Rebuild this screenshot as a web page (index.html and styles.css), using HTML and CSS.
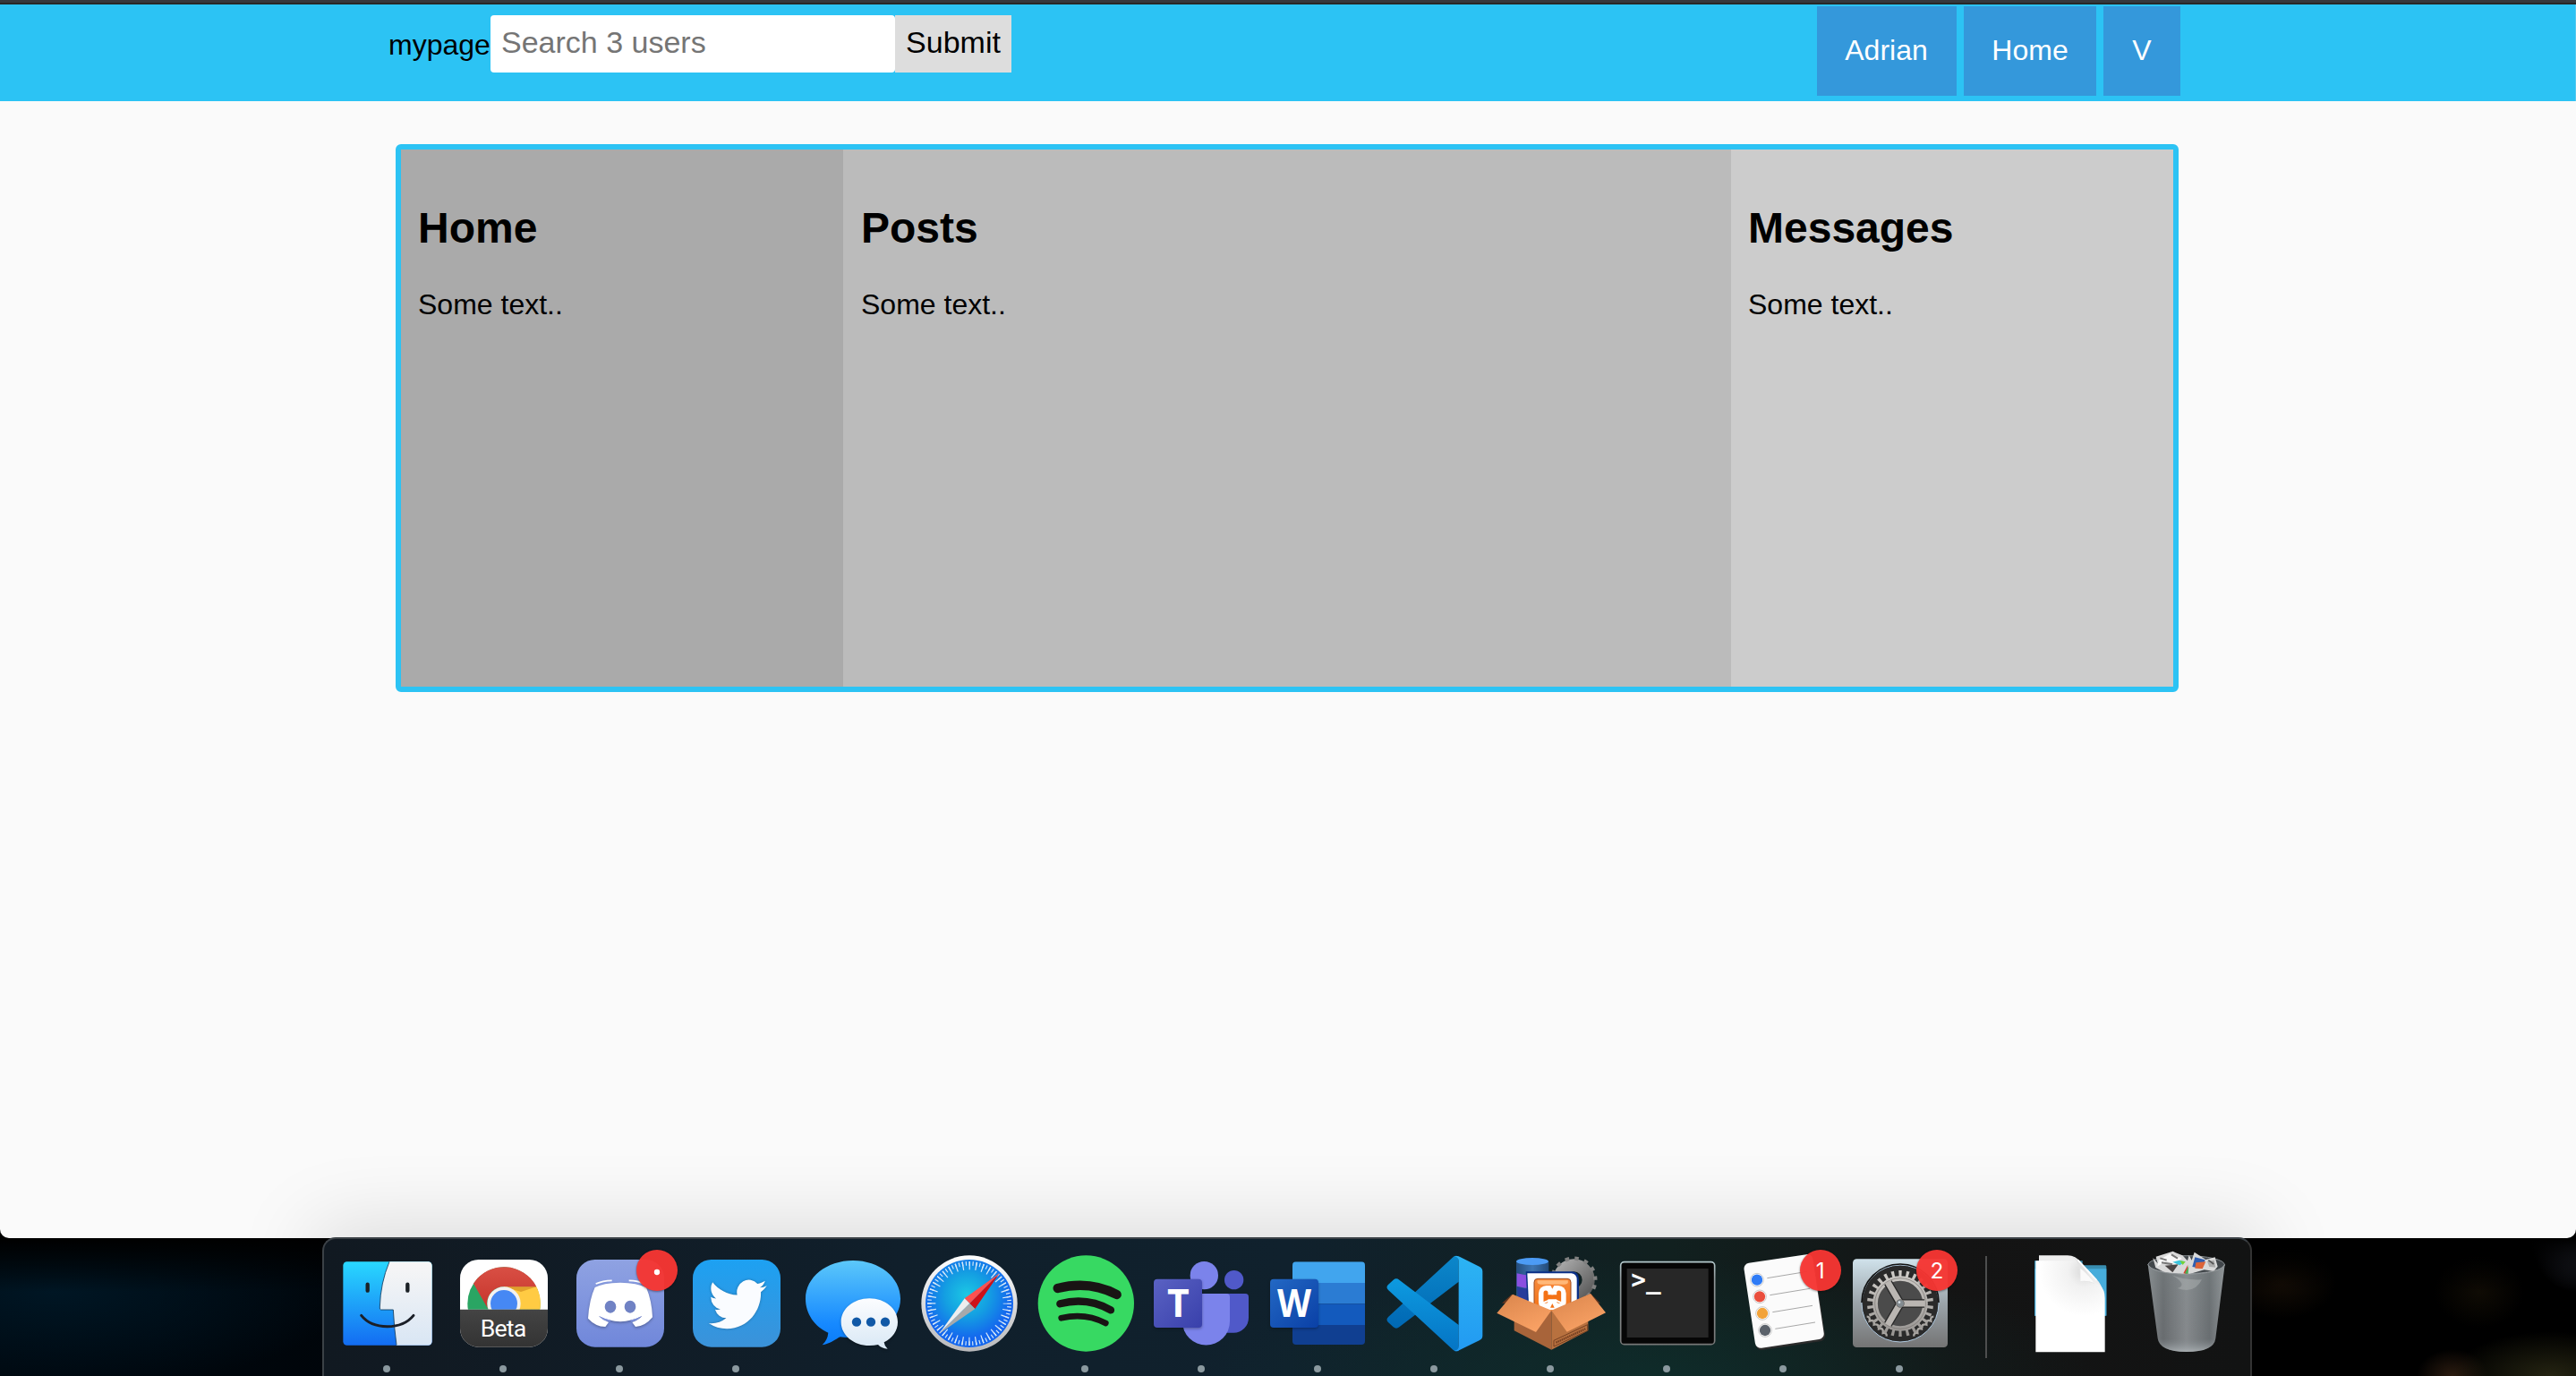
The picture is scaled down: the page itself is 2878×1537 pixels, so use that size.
FILE: index.html
```html
<!DOCTYPE html>
<html lang="en">
<head>
<meta charset="utf-8">
<title>mypage</title>
<link rel="stylesheet" href="styles.css">
</head>
<body>
<main class="window">
  <header class="topbar">
    <form class="search">
      <span class="brand">mypage</span>
      <input class="search-input" type="text" placeholder="Search 3 users">
      <button class="search-submit" type="button">Submit</button>
    </form>
    <nav class="nav">
      <a class="nav-link nav-user">Adrian</a>
      <a class="nav-link nav-home">Home</a>
      <a class="nav-link nav-more">V</a>
    </nav>
  </header>
  <section class="columns">
    <article class="column column-home"><h2>Home</h2><p>Some text..</p></article>
    <article class="column column-posts"><h2>Posts</h2><p>Some text..</p></article>
    <article class="column column-messages"><h2>Messages</h2><p>Some text..</p></article>
  </section>
  <div class="dock-shade"></div>
</main>
<footer class="desktop">
  <div class="dock">
    <!-- Finder -->
    <svg class="app" viewBox="81 132 390 459">
      <defs>
        <linearGradient id="fb" x2="0" y2="1"><stop stop-color="#29d8ff"/><stop offset="1" stop-color="#136cf2"/></linearGradient>
        <linearGradient id="fw" x2="0" y2="1"><stop stop-color="#f7f6f6"/><stop offset="1" stop-color="#d9e6f4"/></linearGradient>
      </defs>
      <rect x="130" y="208" width="298" height="280" rx="13" fill="url(#fb)"/>
      <path d="M285 208H415a13 13 0 0 1 13 13V475a13 13 0 0 1-13 13H309Q301 430 298 369H257Q252 369 253 360Q255 280 285 208Z" fill="url(#fw)"/>
      <path d="M285 208Q255 280 253 360Q252 369 257 369H298Q301 430 309 487" fill="none" stroke="#123a5c" stroke-width="2.5"/>
      <path d="M212 284v21M346 284v21" stroke="#1b2126" stroke-width="13" stroke-linecap="round"/>
      <path d="M191 388C230 437 325 438 366 388" fill="none" stroke="#1b1f27" stroke-width="9" stroke-linecap="round"/>
      <circle cx="276" cy="567" r="12" class="dot"/>
    </svg>
    <!-- Chrome Beta -->
    <svg class="app" viewBox="471 132 390 459">
      <defs>
        <clipPath id="ct"><rect x="522" y="200" width="294" height="168"/></clipPath>
        <linearGradient id="cr" x2="0" y2="1"><stop stop-color="#d94f44"/><stop offset="1" stop-color="#c5352c"/></linearGradient>
        <linearGradient id="cb" x2="0" y2="1"><stop stop-color="#444"/><stop offset="1" stop-color="#333"/></linearGradient>
      </defs>
      <rect x="522" y="201" width="294" height="293" rx="62" fill="#fff"/>
      <g clip-path="url(#ct)">
        <circle cx="669" cy="348" r="122" fill="#2aa563"/>
        <path d="M669 292H778A122 122 0 0 1 669 470Z" fill="#ffcb43"/>
        <path d="M669 292H778L726 309Z" fill="#e0a02b"/>
        <path d="M567 281A122 122 0 0 1 778 292H669A56 56 0 0 0 615 365Z" fill="url(#cr)"/>
        <circle cx="669" cy="348" r="56" fill="#f3f2f0"/>
        <circle cx="669" cy="348" r="45" fill="#4688f4"/>
      </g>
      <path d="M522 368H816V432a62 62 0 0 1-62 62H584a62 62 0 0 1-62-62Z" fill="url(#cb)"/>
      <text x="590" y="458" class="beta" textLength="155">Beta</text>
      <circle cx="666" cy="567" r="12" class="dot"/>
    </svg>
    <!-- Discord -->
    <svg class="app" viewBox="861 132 390 459">
      <defs><linearGradient id="dg" x2="0" y2="1"><stop stop-color="#8fa2e2"/><stop offset="1" stop-color="#7087da"/></linearGradient></defs>
      <rect x="912" y="201" width="294" height="293" rx="62" fill="url(#dg)"/>
      <path d="M977 282Q1000 272 1031 271M1088 271Q1119 272 1140 282" fill="none" stroke="#fff" stroke-width="5"/>
      <path class="soft" d="M974 294Q1000 279 1059 278Q1115 279 1146 294Q1165 340 1167 394Q1142 425 1110 426L1099 411Q1120 404 1132 390Q1095 408 1059 409Q1022 408 987 390Q1000 404 1020 411L1009 426Q975 425 951 398Q955 335 974 294Z" fill="#fff"/>
      <path d="M987 390Q1000 404 1024 409L1028 404Q1005 399 987 390M1132 390Q1120 404 1096 409L1092 404Q1115 399 1132 390" fill="#8193dc"/>
      <ellipse cx="1026" cy="359" rx="19" ry="21" fill="#7082c4"/><ellipse cx="1092" cy="359" rx="19" ry="21" fill="#7082c4"/>
      <circle class="badge" cx="1182" cy="237" r="69"/><circle cx="1182" cy="243" r="9.500" fill="#fff"/>
      <circle cx="1056" cy="567" r="12" class="dot"/>
    </svg>
    <!-- Twitter -->
    <svg class="app" viewBox="21 132 390 459">
      <defs><linearGradient id="tg" x2="0" y2="1"><stop stop-color="#1da1f2"/><stop offset="1" stop-color="#3b92d9"/></linearGradient></defs>
      <rect x="72" y="201" width="294" height="293" rx="62" fill="url(#tg)"/>
      <path class="soft-small" transform="translate(125 250) scale(8.13 8.4)" fill="#fafcff" d="M23.953 4.57a10 10 0 01-2.825.775 4.958 4.958 0 002.163-2.723c-.951.555-2.005.959-3.127 1.184a4.92 4.92 0 00-8.384 4.482C7.69 8.095 4.067 6.13 1.64 3.162a4.822 4.822 0 00-.666 2.475c0 1.71.87 3.213 2.188 4.096a4.904 4.904 0 01-2.228-.616v.06a4.923 4.923 0 003.946 4.827 4.996 4.996 0 01-2.212.085 4.936 4.936 0 004.604 3.417 9.867 9.867 0 01-6.102 2.105c-.39 0-.779-.023-1.17-.067a13.995 13.995 0 007.557 2.209c9.053 0 13.998-7.496 13.998-13.985 0-.21 0-.42-.015-.63A9.935 9.935 0 0024 4.59z"/>
      <circle cx="216" cy="567" r="12" class="dot"/>
    </svg>
    <!-- Messages -->
    <svg class="app" viewBox="411 132 390 459">
      <defs>
        <linearGradient id="mb" x2="0" y2="1"><stop stop-color="#5cc8fa"/><stop offset=".75" stop-color="#1689ff"/><stop offset="1" stop-color="#0b7cf8"/></linearGradient>
        <linearGradient id="mw" x2="0" y2="1"><stop stop-color="#fcfdff"/><stop offset="1" stop-color="#d9e8f5"/></linearGradient>
      </defs>
      <path d="M609 204C697 204 768 260 768 332S697 460 609 463Q585 463 566 460C550 468 530 484 506 487Q524 470 526 446C480 425 450 382 450 332C450 260 521 204 609 204Z" fill="url(#mb)"/>
      <path class="soft" d="M664 331C717 331 759 366 759 410C759 440 741 464 713 478Q714 490 725 500Q705 499 693 486Q680 489 664 489C611 489 569 454 569 410S611 331 664 331Z" fill="url(#mw)"/>
      <g fill="#1058a6"><circle cx="621" cy="410" r="15.500"/><circle cx="669" cy="410" r="15.500"/><circle cx="717" cy="410" r="15.500"/></g>
    </svg>
    <!-- Safari -->
    <svg class="app" viewBox="801 132 390 459">
      <defs>
        <radialGradient id="sg" cx=".47" cy=".4"><stop stop-color="#1cc8e4"/><stop offset=".5" stop-color="#149fe2"/><stop offset="1" stop-color="#1467ee"/></radialGradient>
        <linearGradient id="sr" x2="0" y2="1"><stop stop-color="#fff"/><stop offset="1" stop-color="#b9b9bb"/></linearGradient>
      </defs>
      <circle cx="999" cy="348" r="161" fill="url(#sr)"/>
      <circle cx="999" cy="348" r="147" fill="url(#sg)"/>
      <circle cx="999" cy="348" r="134" fill="none" stroke="#d7e9f8" stroke-width="14" pathLength="72" stroke-dasharray=".3 .7" stroke-dashoffset=".15"/>
      <circle cx="999" cy="348" r="127" fill="none" stroke="#d7e9f8" stroke-width="28" pathLength="36" stroke-dasharray=".17 .83" stroke-dashoffset=".085"/>
      <path d="M1100 247L983 331L1000 348Z" fill="#ff5150"/><path d="M1100 247L1018 366L1000 348Z" fill="#cf1018"/>
      <path d="M898 449L983 331L1000 348Z" fill="#ededee"/><path d="M898 449L1018 366L1000 348Z" fill="#a7a9ab"/>
    </svg>
    <!-- Spotify -->
    <svg class="app" viewBox="21 132 390 459">
      <circle cx="220" cy="348" r="161" fill="#37d962"/>
      <g fill="none" stroke="#191414" stroke-linecap="round">
        <path d="M125 297Q232 270 323 318" stroke-width="31"/>
        <path d="M133 349Q223 325 303 370" stroke-width="25"/>
        <path d="M137 397Q217 378 286 414" stroke-width="20"/>
      </g>
      <circle cx="216" cy="567" r="12" class="dot"/>
    </svg>
    <!-- Teams -->
    <svg class="app" viewBox="411 132 390 459">
      <defs><linearGradient id="tt" x2="1" y2="1"><stop stop-color="#5a62c3"/><stop offset="1" stop-color="#3940ab"/></linearGradient></defs>
      <circle cx="716" cy="269" r="32" fill="#5059c9"/>
      <path d="M660 315H754a11 11 0 0 1 11 11V396a50 50 0 0 1-50 50H670Z" fill="#5059c9"/>
      <circle cx="616" cy="254" r="47" fill="#7b83eb"/>
      <path d="M543 315H691a11 11 0 0 1 11 11V408a79.500 79.500 0 0 1-159 0Z" fill="#7b83eb"/>
      <rect class="soft" x="447" y="266" width="162" height="163" rx="12" fill="url(#tt)"/>
      <text x="529" y="392" class="letter">T</text>
      <circle cx="606" cy="567" r="12" class="dot"/>
    </svg>
    <!-- Word -->
    <svg class="app" viewBox="801 132 390 459">
      <defs>
        <clipPath id="wc"><rect x="912" y="208" width="243" height="278" rx="12"/></clipPath>
        <linearGradient id="wt" x2="1" y2="1"><stop stop-color="#2368c4"/><stop offset="1" stop-color="#0a40a6"/></linearGradient>
      </defs>
      <g clip-path="url(#wc)"><path d="M912 208h243v71H912z" fill="#41a5ee"/><path d="M912 279h243v70H912z" fill="#2b7cd3"/><path d="M912 349h243v71H912z" fill="#135abd"/><path d="M912 420h243v70H912z" fill="#103f91"/></g>
      <rect class="soft" x="837" y="266" width="162" height="163" rx="12" fill="url(#wt)"/>
      <text x="918" y="392" class="letter" textLength="114" lengthAdjust="spacingAndGlyphs">W</text>
      <circle cx="996" cy="567" r="12" class="dot"/>
    </svg>
    <!-- Visual Studio Code -->
    <svg class="app" viewBox="21 132 390 459">
      <defs>
        <linearGradient id="v1" x2="0" y2="1"><stop stop-color="#0c87ca"/><stop offset="1" stop-color="#0068b4"/></linearGradient>
        <linearGradient id="v2" x2="0" y2="1"><stop stop-color="#0d9ae0"/><stop offset="1" stop-color="#0574c4"/></linearGradient>
        <linearGradient id="v3" x2="0" y2="1"><stop stop-color="#2cb4f3"/><stop offset="1" stop-color="#229af2"/></linearGradient>
      </defs>
      <path d="M280 193Q287 186 299 190V275L100 427Q90 435 80 427L62 410Q54 401 64 392Z" fill="url(#v1)"/>
      <path d="M280 503Q287 510 299 507V420L100 269Q90 261 80 269L62 286Q54 295 64 304Z" fill="url(#v2)"/>
      <path d="M285 190Q292 187 302 191L368 224Q379 229 379 241V456Q379 467 368 472L302 504Q292 510 284 506Q299 506 299 490V205Q299 193 285 190Z" fill="url(#v3)"/>
      <circle cx="216" cy="567" r="12" class="dot"/>
    </svg>
    <!-- XAMPP -->
    <svg class="app" viewBox="411 132 390 459">
      <defs>
        <linearGradient id="xg" x2="1" y2="1"><stop stop-color="#a8a8a8"/><stop offset="1" stop-color="#5c5c5c"/></linearGradient>
        <linearGradient id="xc" x2="1"><stop stop-color="#244c7c"/><stop offset=".5" stop-color="#3e75b2"/><stop offset="1" stop-color="#234a78"/></linearGradient>
        <linearGradient id="xf" x2=".6" y2="1"><stop stop-color="#d9854c"/><stop offset="1" stop-color="#f9a164"/></linearGradient>
        <linearGradient id="xo" x2="0" y2="1"><stop stop-color="#f58a3b"/><stop offset="1" stop-color="#f47216"/></linearGradient>
      </defs>
      <circle cx="685" cy="269" r="49" fill="none" stroke="url(#xg)" stroke-width="42"/>
      <circle cx="685" cy="269" r="72" fill="none" stroke="#808080" stroke-width="13" pathLength="14" stroke-dasharray=".42 .58" stroke-dashoffset=".46"/>
      <path d="M492 208V335H601V208Z" fill="url(#xc)"/><path d="M494 247Q545 260 601 247V290Q545 303 494 290Z" fill="#8b4fe0"/><path d="M495 293Q545 304 601 293V345H500Z" fill="#273c9b"/>
      <ellipse cx="546" cy="207" rx="54" ry="12" fill="#4c9bf5"/>
      <path d="M444 347L476 318L610 371L742 315L774 347Z" fill="#65361f"/>
      <path d="M524 241H680Q702 243 702 267V370H531Z" fill="#092f87"/>
      <path d="M529 247H677Q695 249 695 269V370H535Z" fill="#fff"/>
      <rect x="552" y="265" width="123" height="110" rx="12" fill="url(#xo)" stroke="#9b4b1f" stroke-width="3"/>
      <path d="M563 271H665Q669 284 654 284H574Q560 284 563 271Z" fill="#ffb878"/>
      <rect x="567" y="288" width="92" height="82" rx="26" fill="#fff"/>
      <path d="M606 286L613 299L620 286Z" fill="#f68031"/>
      <path d="M591 312V340M635 312V340M591 326H635" stroke="#f47216" stroke-width="15" stroke-linecap="round"/>
      <path d="M613 307V319M581 346L601 338M645 346L625 338" stroke="#fff" stroke-width="6"/>
      <path d="M606 362L613 348L620 362Z" fill="#f47216"/>
      <path d="M485 370L610 371V503L485 439Z" fill="#a8643a"/><path d="M733 370L610 371V503L733 439Z" fill="#b8713f"/>
      <path d="M618 472L731 419V439L618 492Z" fill="none" stroke="#764022" stroke-width="3"/>
      <path d="M625 479L724 433" stroke="#764022" stroke-width="7" stroke-dasharray="5 2"/>
      <path d="M480 317L610 371L558 444L427 380Z" fill="url(#xf)"/><path d="M741 315L610 371L662 443L792 379Z" fill="url(#xf)"/>
      <circle cx="606" cy="567" r="12" class="dot"/>
    </svg>
    <!-- Terminal -->
    <svg class="app" viewBox="801 132 390 459">
      <defs><linearGradient id="te" x2="0" y2="1"><stop stop-color="#b3c8cb"/><stop offset=".2" stop-color="#929a9c"/><stop offset="1" stop-color="#777"/></linearGradient></defs>
      <rect x="842" y="209" width="315" height="276" rx="12" fill="#060606" stroke="url(#te)" stroke-width="5"/>
      <rect x="863" y="231" width="273" height="231" fill="#272727"/>
      <text x="877" y="298" class="prompt">&gt;_</text>
      <circle cx="996" cy="567" r="12" class="dot"/>
    </svg>
    <!-- Reminders -->
    <svg class="app" viewBox="21 132 390 459">
      <g transform="rotate(-8.500 221 341)">
        <rect x="105" y="201" width="234" height="290" rx="19" fill="#2b2b2b"/>
        <rect x="103" y="196" width="233" height="288" rx="19" fill="#fbfbfb"/>
      </g>
      <g stroke="#c9c9c9" stroke-width="3">
        <circle cx="129" cy="269" r="22" fill="#fff"/><circle cx="138" cy="325" r="22" fill="#fff"/><circle cx="147" cy="381" r="22" fill="#fff"/><circle cx="156" cy="438" r="22" fill="#fff"/>
        <path d="M163 263L297 241M172 320L306 298M181 377L315 355M190 433L324 411" stroke="#a8a8a8"/>
      </g>
      <circle cx="129" cy="269" r="18.500" fill="#2f7cf6"/><circle cx="138" cy="325" r="18.500" fill="#ea4e3d"/><circle cx="147" cy="381" r="18.500" fill="#f2a33a"/><circle cx="156" cy="438" r="18.500" fill="#5b626b"/>
      <circle class="badge" cx="342" cy="237" r="69"/><text x="341" y="264" class="count">1</text>
      <circle cx="216" cy="567" r="12" class="dot"/>
    </svg>
    <!-- System Preferences -->
    <svg class="app" viewBox="411 132 390 459">
      <defs>
        <linearGradient id="pg" x2="0" y2="1"><stop stop-color="#d0e2eb"/><stop offset=".5" stop-color="#9ba4aa"/><stop offset="1" stop-color="#747474"/></linearGradient>
        <linearGradient id="pm" gradientUnits="userSpaceOnUse" x1="500" y1="237" x2="500" y2="460"><stop stop-color="#d0cdc9"/><stop offset="1" stop-color="#969390"/></linearGradient>
      </defs>
      <rect x="450" y="199" width="318" height="296" rx="13" fill="url(#pg)"/>
      <circle cx="609" cy="348" r="129" fill="#2a2a2a" stroke="#afc8de" stroke-width="3"/>
      <path d="M480 345A129 129 0 0 1 738 345" fill="none" stroke="#111" stroke-width="5"/>
      <path d="M497 392Q509 392 506 407Q523 400 521 419Q538 414 537 433Q554 428 551 447Q565 445 563 458M721 392Q709 392 712 407Q695 400 697 419Q680 414 681 433Q664 428 667 447Q653 445 655 458" fill="none" stroke="#aaa7a3" stroke-width="7"/>
      <circle cx="609" cy="348" r="100" fill="none" stroke="url(#pm)" stroke-width="22" pathLength="26" stroke-dasharray=".4 .6" stroke-dashoffset=".7"/>
      <circle cx="609" cy="348" r="84" fill="#4b4b4b" stroke="url(#pm)" stroke-width="17"/>
      <circle cx="609" cy="348" r="85" fill="none" stroke="#77736f" stroke-width="2"/>
      <path d="M609 348H690M609 348L568 278M609 348L568 418" stroke="#292929" stroke-width="29"/>
      <path d="M609 348H692M609 348L567 276M609 348L567 420" stroke="#bab6b2" stroke-width="21"/>
      <circle cx="609" cy="348" r="13" fill="#838b90" stroke="#73716e" stroke-width="3"/><circle cx="606" cy="344" r="4" fill="#d8e1e6"/>
      <circle class="badge" cx="732" cy="237" r="69"/><text x="732" y="264" class="count">2</text>
      <circle cx="606" cy="567" r="12" class="dot"/>
    </svg>
    <div class="divider"></div>
    <!-- Documents stack -->
    <svg class="app" viewBox="-36 132 390 459">
      <defs>
        <radialGradient id="pp" gradientUnits="userSpaceOnUse" cx="205" cy="240" r="150"><stop stop-color="#d9d9d9"/><stop offset=".35" stop-color="#f1f1f1"/><stop offset="1" stop-color="#fff"/></radialGradient>
      </defs>
      <path d="M39 205H200V220H277Q280 220 280 225V390H39Z" fill="#398eb2"/><path d="M40 232H280V388H40Z" fill="#47addb"/>
      <path d="M54 187H150Q177 187 195 211L246 265Q264 285 270 310V505H54Z" fill="#eee"/>
      <path d="M43 205H158Q187 204 191 232L193 273Q275 267 275 330V511H43Z" fill="url(#pp)"/>
      <path d="M160 190Q194 204 192 273Q217 272 240 281Q226 255 196 218Q179 191 160 190Z" fill="#e4e4e4"/>
      <path d="M193 230V273Q218 270 239 279Q224 256 193 230Z" fill="#fafafa"/>
      <path d="M185 203L247 270" stroke="#fff" stroke-width="5"/>
    </svg>
    <!-- Trash -->
    <svg class="app" viewBox="354 132 390 459">
      <defs>
        <linearGradient id="rg" x2="1"><stop stop-color="#85898c"/><stop offset=".2" stop-color="#686c6f"/><stop offset=".5" stop-color="#85898c"/><stop offset=".8" stop-color="#696e71"/><stop offset="1" stop-color="#8f9396"/></linearGradient>
        <linearGradient id="rb" x2="0" y2="1"><stop stop-color="#9aa" stop-opacity=".15"/><stop offset=".85" stop-color="#889095" stop-opacity="0"/><stop offset="1" stop-color="#b1b7ba" stop-opacity=".8"/></linearGradient>
      </defs>
      <ellipse cx="548" cy="218" rx="128" ry="30" fill="#42474b" stroke="#8a9094" stroke-width="3"/>
      <path d="M436 195L452 214L446 191L503 173L512 178L535 187L552 205L557 186L566 203L575 176L613 201L644 193L653 224L640 240L608 235L552 251L481 247L445 228Z" fill="#d9d9d9"/>
      <path d="M456 202L492 182L533 196L510 217L480 206L450 224Z" fill="#f8f8f8"/><path d="M460 196L482 203M498 184L519 197M465 211L501 217" stroke="#777" stroke-width="6"/>
      <path d="M476 221L521 217L502 244Z" fill="#4a4545"/><path d="M502 209L524 203L545 208L526 220Z" fill="#3bc3dc"/><path d="M526 205L545 208L536 219Z" fill="#74d335"/>
      <path d="M577 193L611 202L600 231L568 225Z" fill="#315eb0"/><path d="M580 211L613 208L602 232L577 230Z" fill="#dc6439"/>
      <path d="M538 247L553 218L549 250" fill="#d83e2e"/><path d="M543 247L556 222L554 250" fill="#4aae56"/>
      <path d="M618 206L641 203L646 227L625 225Z" fill="#aaa"/><path d="M622 203L640 216" stroke="#555" stroke-width="5"/>
      <path d="M419 217Q433 247 548 250Q663 247 677 217L646 465Q640 510 548 510Q458 509 452 465Z" fill="url(#rg)"/>
      <path d="M419 217Q433 247 548 250Q663 247 677 217L646 465Q640 510 548 510Q458 509 452 465Z" fill="url(#rb)"/>
      <path d="M419 217Q433 247 548 250Q663 247 677 217" fill="none" stroke="#92979a" stroke-width="3"/>
      <path d="M500 253Q535 270 600 268Q575 318 518 297Q555 286 500 253Z" fill="#b2b5b6" opacity=".45"/>
    </svg>
  </div>
</footer>
</body>
</html>
```

FILE: styles.css
```css
* { box-sizing: border-box; }

body {
  margin: 0;
  width: 2878px;
  height: 1537px;
  overflow: hidden;
  display: flex;
  flex-direction: column;
  background: #000;
  color: #000;
  font: 32px/37px "Liberation Sans", Arial, sans-serif;
}

/* Browser window */
.window {
  position: relative;
  flex: none;
  height: 1383px;
  overflow: hidden;
  background: #fafafa;
  border-top: 3px solid #36383d;
  border-radius: 0 0 10px 10px;
}

.topbar {
  display: flex;
  justify-content: space-between;
  height: 110px;
  padding: 2px 442px 0 434px;
  background: #2cc3f4;
  border-top: 2px solid #282828;
  box-shadow: inset -1px 0 #58c9ee;
}

.search {
  display: flex;
  height: 64px;
  margin-top: 10px;
}

.brand {
  width: 114px;
  padding-top: 15px;
}

.search-input {
  width: 452px;
  height: 64px;
  padding: 0 12px 4px;
  border: 0;
  border-radius: 4px;
  background: #fff;
  font: 34px/39px "Liberation Sans", Arial, sans-serif;
}

.search-input::placeholder { color: #757575; }

.search-submit {
  width: 130px;
  height: 64px;
  padding: 0 0 4px;
  border: 0;
  background: #ddd;
  color: #000;
  font: 34px/39px "Liberation Sans", Arial, sans-serif;
}

.nav {
  display: flex;
  gap: 8px;
}

.nav-link {
  height: 100px;
  padding-top: 31px;
  background: #3498db;
  color: #fff;
  text-align: center;
}

.nav-user { width: 156px; padding-right: 1px; }
.nav-home { width: 148px; }
.nav-more { width: 86px; }

.columns {
  display: grid;
  grid-template-columns: 494px 992px 494px;
  width: 1992px;
  height: 612px;
  margin: 48px 0 0 442px;
  border: 6px solid #2cc3f4;
  border-radius: 6px;
}

.column { padding: 20px; }
.column-home { background: #aaa; padding-left: 19px; }
.column-posts { background: #bbb; }
.column-messages { background: #ccc; padding-left: 19px; }

.column h2 {
  margin: 40px 0 0;
  font-size: 48px;
  line-height: 55px;
}

.column p { margin: 40px 0 0; }

/* Shadow the dock throws up over the window */
.dock-shade {
  position: absolute;
  left: 360px;
  bottom: -60px;
  width: 2156px;
  height: 60px;
  box-shadow: 0 0 90px 8px rgba(0, 0, 0, .15);
}

/* Wallpaper strip and dock */
.desktop {
  flex: none;
  height: 154px;
  background:
    linear-gradient(#000 0, transparent 60px),
    radial-gradient(ellipse 50px 60px at 2878px 0, #343747, transparent),
    radial-gradient(ellipse 110px 50px at 2850px 154px, #252412, transparent),
    radial-gradient(ellipse 40px 30px at 2740px 154px, #2c1c10, transparent),
    radial-gradient(ellipse 60px 40px at 2550px 50px, #130c05, transparent),
    radial-gradient(ellipse 50px 40px at 2770px 60px, #0f0b04, transparent),
    radial-gradient(ellipse 330px 110px at 60px 60px, #001624, transparent),
    linear-gradient(90deg, #00080f, #00050a 400px, #000 2500px);
}

.dock {
  display: flex;
  width: 2156px;
  height: 156px;
  margin: -1px 0 0 360px;
  padding: 0 5px;
  position: relative;
  border: 2px solid #3b4146;
  border-bottom: 0;
  border-right-color: #333;
  border-radius: 15px 15px 0 0;
  background:
    radial-gradient(ellipse 500px 130px at 1480px 153px, rgba(14, 48, 46, .7), transparent),
    linear-gradient(90deg, #111921, #101f2b 30%, #10212d 50%, #11201f 70%, #141414 84%, #121313);
}

.app {
  flex: none;
  width: 130px;
  height: 153px;
}

.divider {
  flex: none;
  width: 2px;
  height: 114px;
  margin: 19px 28px 0 31px;
  background: #4d4e4e;
}

.dot { fill: #8b999f; }

.badge {
  fill: #fc3734;
  fill-opacity: .94;
  filter: drop-shadow(0 2px 3px rgba(0, 0, 0, .5));
}

.soft { filter: drop-shadow(0 4px 5px rgba(0, 0, 0, .3)); }
.soft-small { filter: drop-shadow(0 .5px .5px rgba(0, 0, 0, .3)); }

.beta {
  font: 80px Roboto, sans-serif;
  fill: #fff;
}

.letter {
  font: bold 128px "Open Sans", sans-serif;
  fill: #fff;
  text-anchor: middle;
}

.prompt {
  font: bold 83px "DejaVu Sans Mono", monospace;
  fill: #fff;
}

.count {
  font: 73px Inter, sans-serif;
  fill: #fff;
  text-anchor: middle;
}
```
